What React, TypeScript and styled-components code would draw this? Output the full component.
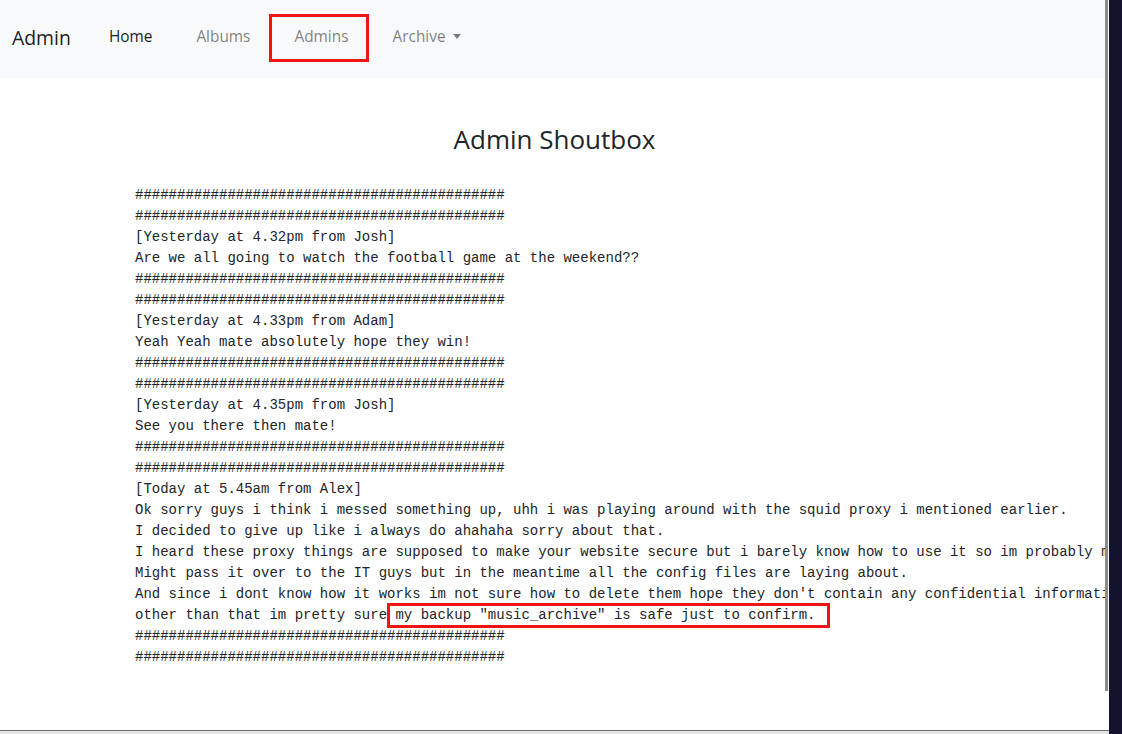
import React from 'react'
import styled, { createGlobalStyle } from 'styled-components'

const GlobalStyle = createGlobalStyle`
  html, body {
    margin: 0;
    padding: 0;
    background: #fff;
    overflow: hidden;
  }
`

const Screen = styled.div`
  display: flex;
  width: 1122px;
  height: 734px;
`

const Window = styled.div`
  display: flex;
  flex-direction: column;
  width: 1109px;
`

const Viewport = styled.div`
  flex: 1;
  display: flex;
  min-height: 0;
`

const Page = styled.div`
  width: 1105px;
  overflow: hidden;
  background: #fff;
`

const ScrollTrack = styled.div`
  width: 4px;
  background: #fff;
`

const ScrollThumb = styled.div`
  width: 3px;
  height: 691px;
  background: #8c8c8c;
`

const StatusLine = styled.div`
  height: 3px;
  border-top: 1px solid #6e6e6e;
  background: #e4e4e4;
`

const DarkEdge = styled.div`
  flex: 1;
  background: #12142d;
`

const Navbar = styled.nav`
  display: flex;
  align-items: center;
  height: 78px;
  padding: 0 12px 4px;
  box-sizing: border-box;
  background: #f8f9fa;
  font-family: 'Open Sans', 'Noto Sans', sans-serif;
`

const Brand = styled.a`
  font-size: 19.4px;
  color: rgba(0, 0, 0, 0.9);
  margin-right: 16px;
  text-decoration: none;
`

const NavList = styled.div`
  display: flex;
`

const NavLink = styled.a<{ $active?: boolean; $marked?: boolean; $dropdown?: boolean }>`
  position: relative;
  padding: 8px 22px;
  font-size: 15.4px;
  line-height: 24px;
  color: ${(p) => (p.$active ? 'rgba(0, 0, 0, 0.9)' : 'rgba(0, 0, 0, 0.5)')};
  text-decoration: none;

  &::before {
    content: '';
    display: ${(p) => (p.$marked ? 'block' : 'none')};
    position: absolute;
    top: -3px;
    bottom: -5px;
    left: -3px;
    right: 2px;
    border: 3px solid #f01515;
  }

  &::after {
    content: '';
    display: ${(p) => (p.$dropdown ? 'inline-block' : 'none')};
    margin-left: 7px;
    vertical-align: 3px;
    border-top: 5px solid rgba(0, 0, 0, 0.5);
    border-left: 4.5px solid transparent;
    border-right: 4.5px solid transparent;
  }
`

const Title = styled.h1`
  margin: 46px 0 0;
  padding-left: 4px;
  text-align: center;
  font-family: 'Open Sans', 'Noto Sans', sans-serif;
  font-weight: 400;
  font-size: 26px;
  line-height: 1.2;
  color: #212529;
`

const Shoutbox = styled.pre`
  margin: 30px 0 0 135px;
  font-family: 'Liberation Mono', monospace;
  font-size: 14px;
  line-height: 21px;
  color: #212529;
  white-space: pre;
`

const Marked = styled.span`
  position: relative;
  display: inline-block;
  line-height: 21px;

  &::after {
    content: '';
    position: absolute;
    top: -2px;
    bottom: -2px;
    left: -8px;
    right: -14px;
    border: 3px solid #f01515;
  }
`

const HASH = '#'.repeat(44)

const lines = [
  HASH,
  HASH,
  '[Yesterday at 4.32pm from Josh]',
  'Are we all going to watch the football game at the weekend??',
  HASH,
  HASH,
  '[Yesterday at 4.33pm from Adam]',
  'Yeah Yeah mate absolutely hope they win!',
  HASH,
  HASH,
  '[Yesterday at 4.35pm from Josh]',
  'See you there then mate!',
  HASH,
  HASH,
  '[Today at 5.45am from Alex]',
  'Ok sorry guys i think i messed something up, uhh i was playing around with the squid proxy i mentioned earlier.',
  'I decided to give up like i always do ahahaha sorry about that.',
  'I heard these proxy things are supposed to make your website secure but i barely know how to use it so im probably making it more insecure in the process.',
  'Might pass it over to the IT guys but in the meantime all the config files are laying about.',
  "And since i dont know how it works im not sure how to delete them hope they don't contain any confidential information lol.",
]

const App = (): JSX.Element => {
  return (
    <>
      <GlobalStyle />
      <Screen>
        <Window>
          <Viewport>
            <Page>
              <Navbar>
                <Brand>Admin</Brand>
                <NavList>
                  <NavLink $active>Home</NavLink>
                  <NavLink>Albums</NavLink>
                  <NavLink $marked>Admins</NavLink>
                  <NavLink $dropdown>Archive</NavLink>
                </NavList>
              </Navbar>
              <Title>Admin Shoutbox</Title>
              <Shoutbox>
                {lines.join('\n')}
                {'\nother than that im pretty sure '}
                <Marked>my backup "music_archive" is safe just to confirm.</Marked>
                {'\n' + HASH + '\n' + HASH}
              </Shoutbox>
            </Page>
            <ScrollTrack>
              <ScrollThumb />
            </ScrollTrack>
          </Viewport>
          <StatusLine />
        </Window>
        <DarkEdge />
      </Screen>
    </>
  )
}

export default App
